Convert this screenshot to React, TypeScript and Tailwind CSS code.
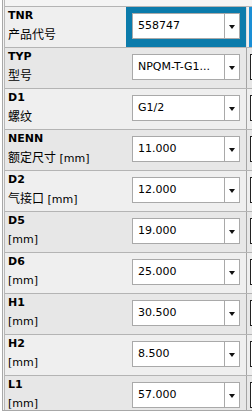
type Row = { code: string; zh?: string; unit?: string; value: string };

const rows: Row[] = [
  { code: "TNR", zh: "产品代号", value: "558747" },
  { code: "TYP", zh: "型号", value: "NPQM-T-G1..." },
  { code: "D1", zh: "螺纹", value: "G1/2" },
  { code: "NENN", zh: "额定尺寸", unit: "[mm]", value: "11.000" },
  { code: "D2", zh: "气接口", unit: "[mm]", value: "12.000" },
  { code: "D5", unit: "[mm]", value: "19.000" },
  { code: "D6", unit: "[mm]", value: "25.000" },
  { code: "H1", unit: "[mm]", value: "30.500" },
  { code: "H2", unit: "[mm]", value: "8.500" },
  { code: "L1", unit: "[mm]", value: "57.000" },
];

function SelectBox({ value }: { value: string }) {
  return (
    <div className="h-[26px] border border-[#a9a9a9] bg-white flex">
      <div className="flex-1 min-w-0 pl-[5px] flex items-center">
        <span className="truncate">{value}</span>
      </div>
      <div className="w-[15px] border-l border-[#a9a9a9] flex items-center justify-center">
        <div className="w-0 h-0 border-x-[3px] border-t-[4px] border-x-transparent border-t-[#111] mt-px" />
      </div>
    </div>
  );
}

function TableRow({ row, index }: { row: Row; index: number }) {
  const active = index === 0;
  const bg = index % 2 === 0 ? "bg-[#efefef]" : "bg-[#e7e7e7]";
  return (
    <div className={`h-[41px] border-t border-[#b4b4b4] flex ${bg}`}>
      {/* label */}
      <div className="w-[121px] pl-[3px] leading-[18.5px]">
        <div className="font-bold">{row.code}</div>
        <div className="whitespace-nowrap">
          {row.zh && <span className="text-[12px]">{row.zh}</span>}
          {row.zh && row.unit && " "}
          {row.unit && <span>{row.unit}</span>}
        </div>
      </div>

      {/* value */}
      <div className={`w-[120px] pt-[6px] px-[6px] ${active ? "bg-[#0b7bab]" : ""}`}>
        <SelectBox value={row.value} />
      </div>

      <div className={`w-px ${active ? "bg-[#dcdcdc]" : "bg-[#a4a4a4]"}`} />

      {/* next column, cut off */}
      {active ? (
        <div className="w-[5px] pl-[2px]">
          <div className="h-full bg-[#1a8fd6]" />
        </div>
      ) : (
        <div className="w-[5px] pl-[3px] pt-[6px]">
          <div className="h-[26px] border-l border-y border-[#222] bg-white" />
        </div>
      )}
    </div>
  );
}

export default function App() {
  return (
    <div className="w-[252px] h-[416px] bg-white overflow-hidden font-['DejaVu_Sans','Noto_Sans_CJK_SC',sans-serif] text-[11px] text-black">
      <div className="ml-[2px] h-[411px] border-l border-b border-[#a8a8a8] bg-[#f4f4f4] overflow-hidden">
        <div className="h-full ml-px border-l border-[#b8b8b8] overflow-hidden">
          <div className="h-[6px]" />
          {rows.map((r, i) => (
            <TableRow key={r.code} row={r} index={i} />
          ))}
        </div>
      </div>
    </div>
  );
}
